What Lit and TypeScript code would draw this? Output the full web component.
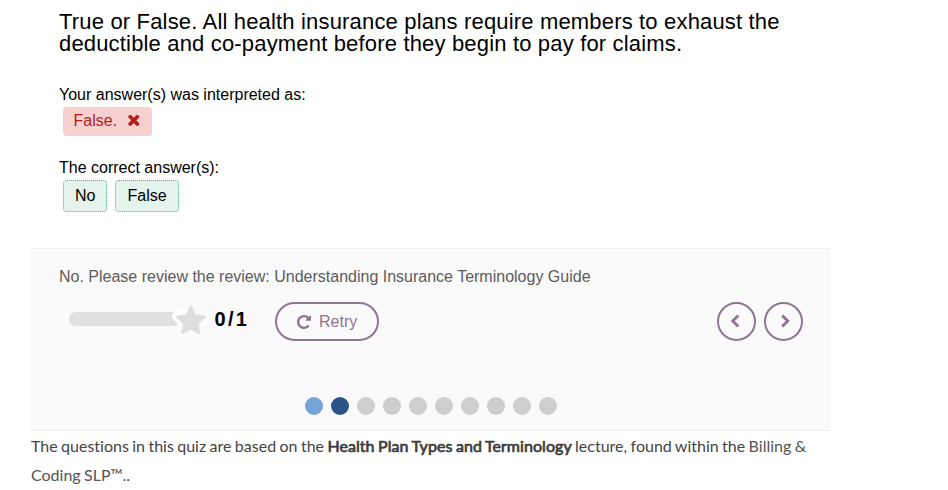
import { LitElement, html, css } from "lit";
import { customElement } from "lit/decorators.js";

@customElement("app-root")
export class AppRoot extends LitElement {
  static styles = css`
    :host { display: block; height: 490px; overflow: hidden; background: #fff; font: 16px/22px "Liberation Sans", Arial, sans-serif; color: #000; }
    .page { width: 800px; margin-left: 31px; white-space: nowrap; }
    .question { height: 248px; box-sizing: border-box; padding: 11px 0 0 28px; }
    .title { font-size: 22px; line-height: 22px; letter-spacing: 0.17px; }
    .label { margin-top: 28px; line-height: 24px; }
    .label.second { margin-top: 20px; }
    .chips { display: flex; gap: 8px; padding-left: 4px; }
    .wrong { display: flex; align-items: center; box-sizing: border-box; width: 89px; height: 29px; padding: 0 0 2px 10.5px; border-radius: 4px; background: #f7d0d0; color: #b71c1c; line-height: 27px; }
    .wrong svg { margin: 0 0 1px 11px; }
    .right { box-sizing: border-box; height: 32px; padding: 0 11px; border: 1px dotted #5ead8c; border-radius: 4px; background: #e4f3ec; line-height: 30px; }
    .feedback { height: 183px; box-sizing: border-box; border-top: 1px solid #ededed; border-bottom: 1px solid #ededed; background: #fafafa; padding: 17px 28px 0; color: #5c5c5c; }
    .bar { display: flex; align-items: center; height: 39px; margin-top: 14px; }
    .meter { margin: 0 0 4px 10px; flex: none; }
    .score { margin: 0 0 5px 7.5px; width: 60.5px; color: #000; font-weight: 700; font-size: 20px; letter-spacing: 2.3px; }
    .btn { box-sizing: border-box; height: 39px; border: 2px solid #8e7690; border-radius: 20px; color: #8e7690; display: flex; align-items: center; }
    .retry { width: 104px; padding-left: 20px; gap: 8px; }
    .round { width: 39px; justify-content: center; }
    .prev { margin-left: auto; }
    .next { margin-left: 8px; }
    .dots { display: flex; justify-content: center; gap: 8px; margin-top: 56px; }
    .dot { width: 18px; height: 18px; border-radius: 50%; background: #cecece; }
    .dot.done { background: #75a3d6; }
    .dot.current { background: #285585; }
    .note { font: 16px/29px Lato, sans-serif; color: #444; word-spacing: -0.7px; font-variant-ligatures: none; }
    .fat { -webkit-text-stroke: 0.7px #3d3d3d; color: #3d3d3d; letter-spacing: 0.06px; }
    .link { color: #555; }
  `;
  render() {
    return html`<div class="page">
      <div class="question">
        <div class="title">True or False. All health insurance plans require members to exhaust the<br>deductible and co-payment before they begin to pay for claims.</div>
        <div class="label">Your answer(s) was interpreted as:</div>
        <div class="chips"><div class="wrong">False.<svg width="11.500" height="11.500" viewBox="290 290 1212 1212"><path fill="currentColor" d="M1490 1322q0 40-28 68l-136 136q-28 28-68 28t-68-28l-294-294-294 294q-28 28-68 28t-68-28l-136-136q-28-28-28-68t28-68l294-294-294-294q-28-28-28-68t28-68l136-136q28-28 68-28t68 28l294 294 294-294q28-28 68-28t68 28l136 136q28 28 28 68t-28 68l-294 294 294 294q28 28 28 68z"/></svg></div></div>
        <div class="label second">The correct answer(s):</div>
        <div class="chips"><div class="right">No</div><div class="right">False</div></div>
      </div>
      <div class="feedback">
        <div>No. Please review the review: Understanding Insurance Terminology Guide</div>
        <div class="bar">
          <svg class="meter" width="138" height="34" viewBox="69 303 138 34"><path d="M76 312H177V326H76A7 7 0 0 1 76 312Z" fill="#e0e0e0"/><path d="M184 309.500L176.500 311Q169.500 314 173 319.500L179.500 325L178.500 331H187V309.500Z" fill="#fff"/><path d="M190.700 306.500L195 315.300L204.600 316.700L197.600 323.600L199.300 333L190.700 328.500L182.100 333L183.800 323.600L176.800 316.700L186.400 315.300Z" fill="#dedede" stroke="#dedede" stroke-width="2" stroke-linejoin="round"/></svg>
          <div class="score">0/1</div>
          <div class="btn retry"><svg width="14" height="14" viewBox="128 128 1536 1536"><path fill="currentColor" d="M1664 256v448q0 26-19 45t-45 19h-448q-42 0-59-40-17-39 14-69l138-138q-148-137-349-137-104 0-198.500 40.500t-163.500 109.500-109.500 163.500-40.500 198.500 40.500 198.500 109.500 163.500 163.500 109.500 198.500 40.500q119 0 225-52t179-147q7-10 23-12 15 0 25 9l137 138q9 8 9.500 20.500t-7.500 22.500q-109 132-264 204.500t-327 72.500q-156 0-298-61t-245-164-164-245-61-298 61-298 164-245 245-164 298-61q147 0 284.500 55.500t244.500 156.500l130-129q29-31 70-14 39 17 39 59z"/></svg><span>Retry</span></div>
          <div class="btn round prev"><svg width="15" height="15" viewBox="0 0 15 15"><path d="M9.300 1.500L3.800 7L9.300 12.500" fill="none" stroke="currentColor" stroke-width="3"/></svg></div>
          <div class="btn round next"><svg width="15" height="15" viewBox="0 0 15 15"><path d="M6.200 1.500L11.700 7L6.200 12.500" fill="none" stroke="currentColor" stroke-width="3"/></svg></div>
        </div>
        <div class="dots">${Array.from({ length: 10 }, (_, i) => html`<div class="dot ${i === 0 ? "done" : i === 1 ? "current" : ""}"></div>`)}</div>
      </div>
      <div class="note">The questions in this quiz are based on the <span class="fat">Health Plan Types and Terminology</span> lecture, found within the <span class="link">Billing &amp;<br>Coding SLP™.</span>.</div>
    </div>`;
  }
}
